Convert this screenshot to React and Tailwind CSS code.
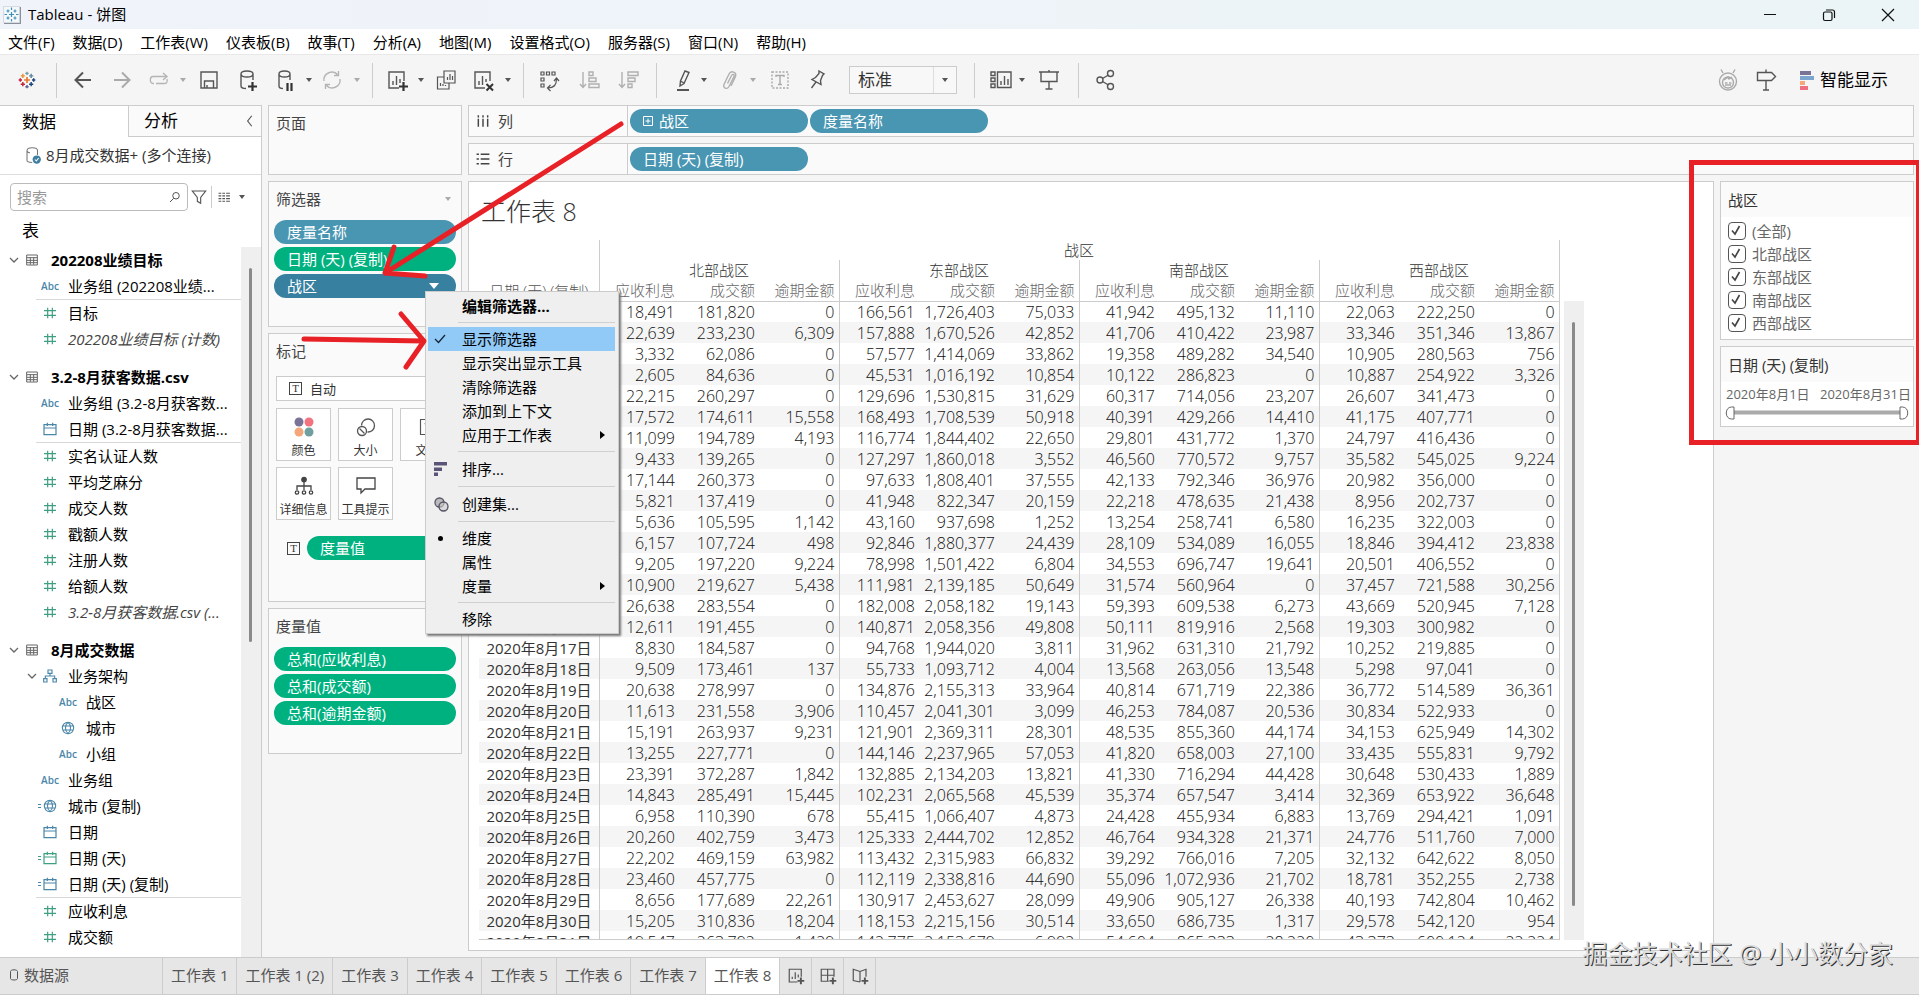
import React from "react";

const REGIONS = ["北部战区", "东部战区", "南部战区", "西部战区"];
const MEASURES = ["应收利息", "成交额", "逾期金额"];

// one line per day of August 2020, three measures for each region
const ROWS = `18,491 181,820 0 166,561 1,726,403 75,033 41,942 495,132 11,110 22,063 222,250 0
22,639 233,230 6,309 157,888 1,670,526 42,852 41,706 410,422 23,987 33,346 351,346 13,867
3,332 62,086 0 57,577 1,414,069 33,862 19,358 489,282 34,540 10,905 280,563 756
2,605 84,636 0 45,531 1,016,192 10,854 10,122 286,823 0 10,887 254,922 3,326
22,215 260,297 0 129,696 1,530,815 31,629 60,317 714,056 23,207 26,607 341,473 0
17,572 174,611 15,558 168,493 1,708,539 50,918 40,391 429,266 14,410 41,175 407,771 0
11,099 194,789 4,193 116,774 1,844,402 22,650 29,801 431,772 1,370 24,797 416,436 0
9,433 139,265 0 127,297 1,860,018 3,552 46,560 770,572 9,757 35,582 545,025 9,224
17,144 260,373 0 97,633 1,808,401 37,555 42,133 792,346 36,976 20,982 356,000 0
5,821 137,419 0 41,948 822,347 20,159 22,218 478,635 21,438 8,956 202,737 0
5,636 105,595 1,142 43,160 937,698 1,252 13,254 258,741 6,580 16,235 322,003 0
6,157 107,724 498 92,846 1,880,377 24,439 28,109 534,089 16,055 18,846 394,412 23,838
9,205 197,220 9,224 78,998 1,501,422 6,804 34,553 696,747 19,641 20,501 406,552 0
10,900 219,627 5,438 111,981 2,139,185 50,649 31,574 560,964 0 37,457 721,588 30,256
26,638 283,554 0 182,008 2,058,182 19,143 59,393 609,538 6,273 43,669 520,945 7,128
12,611 191,455 0 140,871 2,058,356 49,808 50,111 819,916 2,568 19,303 300,982 0
8,830 184,587 0 94,768 1,944,020 3,811 31,962 631,310 21,792 10,252 219,885 0
9,509 173,461 137 55,733 1,093,712 4,004 13,568 263,056 13,548 5,298 97,041 0
20,638 278,997 0 134,876 2,155,313 33,964 40,814 671,719 22,386 36,772 514,589 36,361
11,613 231,558 3,906 110,457 2,041,301 3,099 46,253 784,087 20,536 30,834 522,933 0
15,191 263,937 9,231 121,901 2,369,311 28,301 48,535 855,360 44,174 34,153 625,949 14,302
13,255 227,771 0 144,146 2,237,965 57,053 41,820 658,003 27,100 33,435 555,831 9,792
23,391 372,287 1,842 132,885 2,134,203 13,821 41,330 716,294 44,428 30,648 530,433 1,889
14,843 285,491 15,445 102,231 2,065,568 45,539 35,374 657,547 3,414 32,369 653,922 36,648
6,958 110,390 678 55,415 1,066,407 4,873 24,428 455,934 6,883 13,769 294,421 1,091
20,260 402,759 3,473 125,333 2,444,702 12,852 46,764 934,328 21,371 24,776 511,760 7,000
22,202 469,159 63,982 113,432 2,315,983 66,832 39,292 766,016 7,205 32,132 642,622 8,050
23,460 457,775 0 112,119 2,338,816 44,690 55,096 1,072,936 21,702 18,781 352,255 2,738
8,656 177,689 22,261 130,917 2,453,627 28,099 49,906 905,127 26,338 40,193 742,804 10,462
15,205 310,836 18,204 118,153 2,215,156 30,514 33,650 686,735 1,317 29,578 542,120 954
19,547 263,792 1,429 142,775 2,153,679 6,992 54,604 865,333 28,220 43,373 600,124 22,224`
  .split("\n")
  .map((line) => line.split(" "));

const BLUE = "#4a86a8";
const GREEN = "#3f9f83";

const Icon = ({ size = 24, color = "#555", children, className = "" }) => (
  <svg
    width={size}
    height={size}
    viewBox="0 0 24 24"
    fill="none"
    stroke={color}
    strokeWidth="1.4"
    className={"shrink-0 " + className}
  >
    {children}
  </svg>
);

const Caret = ({ color = "#555", className = "" }) => (
  <svg width="8" height="8" viewBox="0 0 8 8" className={"shrink-0 " + className}>
    <path d="M1 2h6L4 6z" fill={color} />
  </svg>
);

const TableauLogo = () => (
  <svg width="20" height="20" viewBox="0 0 24 24" fill="none" strokeWidth="1.7" className="shrink-0">
    <path d="M12 8.500v7M8.500 12h7" stroke="#e8762c" strokeWidth="2" />
    <path d="M7 4.500v5M4.500 7h5" stroke="#e8912d" />
    <path d="M17 4.500v5M14.500 7h5" stroke="#5b879b" />
    <path d="M7 14.500v5M4.500 17h5" stroke="#c72037" />
    <path d="M17 14.500v5M14.500 17h5" stroke="#1f457e" />
    <path d="M12 2v4M10 4h4" stroke="#7199a6" />
    <path d="M12 18v4M10 20h4" stroke="#5c6692" />
    <path d="M4 10v4M2 12h4" stroke="#c72037" />
    <path d="M20 10v4M18 12h4" stroke="#1f457e" />
  </svg>
);

const AppIcon = () => (
  <svg width="18" height="18" viewBox="0 0 18 18" fill="none" stroke="#3f8fb5" strokeWidth="1.200">
    <path d="M.500 .500h16v16h-16z" fill="#f4f8fb" stroke="#d5dbe2" />
    <path d="M17.500 1v16.500H1" stroke="#8b9199" />
    <path d="M8.500 6v5M6 8.500h5M5 3.500v3M3.500 5h3M12 3.500v3M10.500 5h3M5 10.500v3M3.500 12h3M12 10.500v3M10.500 12h3M8.500 1.500v2.500M8.500 13v2.500M1.500 8.500H4M13 8.500h2.500" />
  </svg>
);

const Abc = () => (
  <span className="flex w-4 justify-center text-[10px] font-semibold text-[#4a86a8]">Abc</span>
);

const Hash = () => (
  <Icon size={16} color={GREEN}>
    <path d="M8.500 4v16M15.500 4v16M3 8.500h18M3 15.500h18" strokeWidth="1.8" />
  </Icon>
);

const Equals = ({ color }) => (
  <svg width="4" height="6" viewBox="0 0 4 6" className="absolute top-[5px] -left-1">
    <path d="M0 1.500h3M0 4.500h3" stroke={color} />
  </svg>
);

const CalendarIcon = ({ color = BLUE, calc }) => (
  <span className="relative flex">
    <Icon size={16} color={color}>
      <path d="M3 5.500h18v15H3zM3 10.500h18M8 2.500v5M16 2.500v5" strokeWidth="1.8" />
    </Icon>
    {calc && <Equals color={color} />}
  </span>
);

const Globe = ({ calc }) => (
  <span className="relative flex">
    <Icon size={16} color={BLUE}>
      <path
        d="M12 3.500a8.500 8.500 0 1 0 0 17a8.500 8.500 0 1 0 0-17M12 3.500c-5 4-5 13 0 17M12 3.500c5 4 5 13 0 17M4 9h16M4 15h16"
        strokeWidth="1.6"
      />
    </Icon>
    {calc && <Equals color={BLUE} />}
  </span>
);

const Hierarchy = () => (
  <Icon size={16} color={BLUE}>
    <path d="M9 3h6v5H9zM2.500 16h5v5h-5zM16.500 16h5v5h-5zM12 8v4M5 16v-4h14v4" strokeWidth="1.7" />
  </Icon>
);

const SheetIcon = () => (
  <Icon size={16} color="#666">
    <path d="M4 4.500h16v15H4zM4 8.500h16M4 12.500h16M4 16h16M9.500 8v11M14.500 8v11" strokeWidth="1.5" />
  </Icon>
);

const TextMark = () => (
  <span className="flex size-[13px] shrink-0 items-center justify-center border border-[#444] font-['Liberation_Serif',serif] text-[11px] leading-none text-[#333]">
    T
  </span>
);

const Chevron = () => (
  <Icon size={12} color="#666">
    <path d="M4 8l8 8l8-8" strokeWidth="2.5" />
  </Icon>
);

const Group = ({ name, children }) => (
  <section className="pb-3">
    <h3 className="flex h-[26px] items-center pl-2 font-bold text-black">
      <Chevron />
      <span className="mr-[11px] ml-1 flex">
        <SheetIcon />
      </span>
      {name}
    </h3>
    <ul>{children}</ul>
  </section>
);

const Field = ({ icon, name, italic, nested }) => (
  <li className={"flex h-[26px] items-center gap-2.5 " + (nested ? "pl-[60px]" : "pl-[42px]")}>
    {icon}
    <span className={"whitespace-nowrap " + (italic ? "text-[#444] italic" : "text-black")}>{name}</span>
  </li>
);

const FieldLine = () => <li className="ml-9 h-px bg-[#d9d9d9]" />;

const DataPane = () => (
  <aside className="flex w-[262px] shrink-0 flex-col border-r border-[#ccc] bg-white">
    <div className="flex h-8 border-t border-[#ccc]">
      <button className="w-32 pl-[22px] text-left text-[17px] text-black">数据</button>
      <button className="flex flex-1 items-center justify-between border-b border-l border-[#ccc] bg-[#fafafa] pr-1 pl-[15px] text-[17px] text-black">
        分析
        <Icon size={14} color="#555">
          <path d="M15 3l-7 9l7 9" strokeWidth="2" />
        </Icon>
      </button>
    </div>
    <div className="flex h-[38px] items-center gap-1 border-b border-[#ddd] pb-0.5 pl-6 text-[#333]">
      <Icon size={18} color="#777">
        <path d="M4 6v13c0 2 3 3 7 3M4 6c0-5 14-5 14 0M4 6c0 2.500 2 3 4 3M18 6v6" />
        <circle cx="17" cy="18" r="5.500" fill="#3f7fa3" stroke="none" />
        <path d="M14.500 18l2 2l3-4" stroke="#fff" />
      </Icon>
      8月成交数据+ (多个连接)
    </div>
    <div className="mt-2 flex h-[28px] items-center pl-2.5">
      <div className="flex h-[28px] w-[178px] items-center rounded-sm border border-[#bbb] pr-1.5 pl-1.5">
        <input aria-label="搜索" placeholder="搜索" className="w-full min-w-0 outline-none placeholder:text-[#999]" />
        <Icon size={12} color="#555">
          <path d="M14 3a6.500 6.500 0 1 0 0 13a6.500 6.500 0 1 0 0-13M9.500 14.500L2 22" strokeWidth="2" />
        </Icon>
      </div>
      <button aria-label="筛选" className="ml-[3px]">
        <Icon size={16}>
          <path d="M2 3h20l-7.500 9.500v9l-5-3v-6z" strokeWidth="1.7" />
        </Icon>
      </button>
      <span className="ml-1 h-[22px] w-px bg-[#ccc]" />
      <button aria-label="视图" className="ml-1.5 flex items-center gap-[7px]">
        <Icon size={13}>
          <path d="M1 4h5M8 4h5M15 4h7M1 9h5M8 9h5M15 9h7M1 14h5M8 14h5M15 14h7M1 19h5M8 19h5M15 19h7" strokeWidth="2" />
        </Icon>
        <Caret />
      </button>
    </div>
    <h2 className="mt-2 flex h-6 items-center pl-[22px] text-[17px] text-black">表</h2>

    <div className="mt-1 flex min-h-0 flex-1">
      <div className="min-w-0 flex-1 overflow-hidden">
        <Group name="202208业绩目标">
          <Field icon={<Abc />} name="业务组 (202208业绩..." />
          <FieldLine />
          <Field icon={<Hash />} name="目标" />
          <Field icon={<Hash />} name="202208业绩目标 (计数)" italic />
        </Group>
        <Group name="3.2-8月获客数据.csv">
          <Field icon={<Abc />} name="业务组 (3.2-8月获客数..." />
          <Field icon={<CalendarIcon />} name="日期 (3.2-8月获客数据..." />
          <FieldLine />
          {["实名认证人数", "平均芝麻分", "成交人数", "戳额人数", "注册人数", "给额人数"].map((n) => (
            <Field key={n} icon={<Hash />} name={n} />
          ))}
          <Field icon={<Hash />} name="3.2-8月获客数据.csv (..." italic />
        </Group>
        <Group name="8月成交数据">
          <li className="flex h-[26px] items-center pl-[26px]">
            <Chevron />
            <span className="mr-2.5 ml-1 flex">
              <Hierarchy />
            </span>
            <span className="text-black">业务架构</span>
          </li>
          <Field nested icon={<Abc />} name="战区" />
          <Field nested icon={<Globe />} name="城市" />
          <Field nested icon={<Abc />} name="小组" />
          <Field icon={<Abc />} name="业务组" />
          <Field icon={<Globe calc />} name="城市 (复制)" />
          <Field icon={<CalendarIcon />} name="日期" />
          <Field icon={<CalendarIcon color={GREEN} calc />} name="日期 (天)" />
          <Field icon={<CalendarIcon calc />} name="日期 (天) (复制)" />
          <FieldLine />
          <Field icon={<Hash />} name="应收利息" />
          <Field icon={<Hash />} name="成交额" />
        </Group>
      </div>
      <div className="w-5 shrink-0 bg-[#efefef] pt-[21px] pl-2">
        <div className="h-[374px] w-[3px] rounded-full bg-[#8a8a8a]" />
      </div>
    </div>
  </aside>
);

const Pill = ({ tone = "blue", className = "w-full", children }) => {
  const tones = {
    blue: "bg-[#4996b2]",
    dark: "bg-[#37809f]",
    green: "bg-[#00b180]",
  };
  return (
    <button className={`flex h-6 items-center rounded-full px-[13px] text-white ${tones[tone]} ${className}`}>
      {children}
    </button>
  );
};

const Card = ({ title, className = "", children }) => (
  <section className={"border border-[#ccc] bg-[#fafafa] px-[5px] " + className}>
    <h2 className="flex h-[34px] items-center pl-0.5 text-[#444]">{title}</h2>
    {children}
  </section>
);

const MarkButton = ({ name, children, className = "w-[55px]" }) => (
  <button
    className={
      "flex h-[53px] shrink-0 flex-col items-center justify-between border border-[#ccc] bg-white pt-2 text-[12px] leading-[18px] text-[#333] " +
      className
    }
  >
    {children}
    <span className="whitespace-nowrap">{name}</span>
  </button>
);

const Shelves = () => (
  <div className="flex w-[194px] shrink-0 flex-col gap-1.5">
    <Card title="页面" className="h-[70px]" />
    <Card
      title={
        <span className="flex w-full items-center justify-between pr-1">
          筛选器
          <Caret color="#aaa" />
        </span>
      }
      className="h-[146px] border-[#b0b0b0]"
    >
      <div className="mt-1 flex flex-col gap-[3px]">
        <Pill>度量名称</Pill>
        <Pill tone="green">日期 (天) (复制)</Pill>
        <Pill tone="dark">
          战区
          <svg width="10" height="6" viewBox="0 0 10 6" className="mr-1 ml-auto">
            <path d="M0 0h10L5 6z" fill="#fff" />
          </svg>
        </Pill>
      </div>
    </Card>
    <Card title="标记" className="h-[269px] overflow-hidden">
      <button className="mt-2 ml-0.5 flex h-[25px] w-[174px] items-center gap-2 border border-[#ccc] bg-white pl-3 text-[13px] text-[#333]">
        <TextMark />
        自动
      </button>
      <div className="mt-[7px] ml-0.5 flex gap-[7px]">
        <MarkButton name="颜色">
          <svg width="20" height="20" viewBox="0 0 20 20">
            <circle cx="5" cy="5" r="4.500" fill="#7b7298" />
            <circle cx="15" cy="5" r="4.500" fill="#f2727f" />
            <circle cx="5" cy="15" r="4.500" fill="#f3a77a" />
            <circle cx="15" cy="15" r="4.500" fill="#6f9f9f" />
          </svg>
        </MarkButton>
        <MarkButton name="大小">
          <svg width="20" height="20" viewBox="0 0 20 20" fill="none" stroke="#555" strokeWidth="1.300">
            <path d="M5.500 8.500a6.500 6.500 0 1 1 6 6.500" />
            <circle cx="6" cy="14" r="4.500" />
            <path d="M3.500 11.500l5 5" />
          </svg>
        </MarkButton>
        <MarkButton name="文本">
          <Icon size={20}>
            <path d="M3 3h18v18H3zM8 8h8M12 8v9" />
          </Icon>
        </MarkButton>
      </div>
      <div className="mt-1.5 ml-0.5 flex gap-[7px]">
        <MarkButton name="详细信息">
          <svg width="20" height="20" viewBox="0 0 20 20" fill="none" stroke="#444" strokeWidth="1.300">
            <circle cx="10" cy="3.500" r="2.200" fill="#444" />
            <path d="M10 5v9M3 14v-4h14v4" />
            <circle cx="3" cy="16.500" r="1.700" />
            <circle cx="10" cy="16.500" r="1.700" />
            <circle cx="17" cy="16.500" r="1.700" />
          </svg>
        </MarkButton>
        <MarkButton name="工具提示">
          <svg width="20" height="20" viewBox="0 0 20 20" fill="none" stroke="#444" strokeWidth="1.300">
            <path d="M1 2h18v11H9l-4 4v-4H1z" />
          </svg>
        </MarkButton>
      </div>
      <div className="mt-4 ml-[13px] flex items-center gap-[7px]">
        <TextMark />
        <Pill tone="green" className="w-[149px]">
          度量值
        </Pill>
      </div>
    </Card>
    <Card title="度量值" className="h-[146px]">
      <div className="mt-1 flex flex-col gap-[3px]">
        <Pill tone="green">总和(应收利息)</Pill>
        <Pill tone="green">总和(成交额)</Pill>
        <Pill tone="green">总和(逾期金额)</Pill>
      </div>
    </Card>
  </div>
);

const ShelfRow = ({ label, icon, children }) => (
  <div className="flex h-8 shrink-0 border border-[#ccc] bg-[#fafafa]">
    <div className="flex w-[159px] items-center gap-2 border-r border-[#ccc] pl-[7px] text-[#444]">
      {icon}
      {label}
    </div>
    <div className="flex items-center gap-0.5 pl-0.5">{children}</div>
  </div>
);

const Crosstab = () => (
  <table className="w-[1080px] table-fixed border-collapse text-[15px] leading-5 text-[#333]">
    <colgroup>
      <col className="w-[120px]" />
      {REGIONS.flatMap((r) => MEASURES.map((m) => <col key={r + m} className="w-20" />))}
    </colgroup>
    <thead>
      <tr className="h-5">
        <th rowSpan={3} className="border-r border-b border-[#ccc] p-0 align-bottom font-light text-[#555]">
          日期 (天) (复制)
        </th>
        <th colSpan={12} className="border-r border-[#ccc] p-0 font-light">
          战区
        </th>
      </tr>
      <tr className="h-5">
        {REGIONS.map((r) => (
          <th key={r} colSpan={3} className="border-r border-[#ccc] p-0 font-light">
            {r}
          </th>
        ))}
      </tr>
      <tr className="h-[21px]">
        {REGIONS.map((r) =>
          MEASURES.map((m, i) => (
            <th
              key={r + m}
              className={
                "border-b border-[#ccc] p-0 pr-1 text-right font-light text-[#666] " + (i === 2 ? "border-r" : "")
              }
            >
              {m}
            </th>
          ))
        )}
      </tr>
    </thead>
    <tbody>
      {ROWS.map((row, day) => (
        <tr key={day} className="h-[21px] odd:bg-white even:bg-[#f5f5f5]">
          <th className="border-r border-[#ccc] p-0 pr-[7px] text-right font-normal whitespace-nowrap text-[#333]">
            2020年8月{day + 1}日
          </th>
          {row.map((value, i) => (
            <td
              key={i}
              className={
                "border-[#ccc] p-0 pr-1 text-right text-[16px] font-light text-[#111] " +
                (i % 3 === 2 ? "border-r" : "")
              }
            >
              {value}
            </td>
          ))}
        </tr>
      ))}
    </tbody>
  </table>
);

const Check = ({ label }) => (
  <label className="flex h-[23px] items-center gap-1.5 text-[#666]">
    <span className="grid">
      <input
        type="checkbox"
        defaultChecked
        className="col-start-1 row-start-1 size-[18px] appearance-none rounded-sm border border-[#555] bg-white"
      />
      <svg viewBox="0 0 18 18" className="pointer-events-none col-start-1 row-start-1 size-[18px]">
        <path d="M4 8.500l3 3.500l4.500-8" fill="none" stroke="#444" strokeWidth="1.600" />
      </svg>
    </span>
    {label}
  </label>
);

const QuickFilters = () => (
  <div className="flex w-[200px] shrink-0 flex-col gap-1.5 pl-1.5">
    <section className="h-[159px] border border-[#ccc] bg-white">
      <h2 className="flex h-[35px] items-center bg-[#fafafa] pl-[7px] text-[#333]">战区</h2>
      <div className="mt-0.5 pl-[7px]">
        {["(全部)", ...REGIONS].map((r) => (
          <Check key={r} label={r} />
        ))}
      </div>
    </section>
    <section className="h-[81px] border border-[#ccc] bg-white">
      <h2 className="flex h-[35px] items-center bg-[#fafafa] pl-[7px] text-[#333]">日期 (天) (复制)</h2>
      <div className="flex h-6 items-center justify-between pr-0.5 pl-[5px] text-[13px] whitespace-nowrap text-[#666]">
        <span>2020年8月1日</span>
        <span>2020年8月31日</span>
      </div>
      <div className="relative mx-1">
        <svg width="184" height="14" viewBox="0 0 184 14" fill="none" className="w-full">
          <path d="M8 6.500h168" stroke="#aaa" strokeWidth="4" />
          <path d="M9 1v12H6.500c-7 0-7-12 0-12z" fill="#fff" stroke="#666" />
          <path d="M175 1v12h2.500c7 0 7-12 0-12z" fill="#fff" stroke="#666" />
        </svg>
        <input
          type="range"
          aria-label="开始日期"
          min="1"
          max="31"
          defaultValue="1"
          className="absolute inset-y-0 left-0 w-1/2 opacity-0"
        />
        <input
          type="range"
          aria-label="结束日期"
          min="1"
          max="31"
          defaultValue="31"
          className="absolute inset-y-0 right-0 w-1/2 opacity-0"
        />
      </div>
    </section>
  </div>
);

const Worksheet = () => (
  <main className="flex min-w-0 flex-1 flex-col gap-1.5 pr-[5px]">
    <ShelfRow
      label="列"
      icon={
        <Icon size={14} color="#444">
          <path d="M4 2v4M4 8v14M12 2v4M12 8v14M20 2v4M20 8v14" strokeWidth="2.500" />
        </Icon>
      }
    >
      <Pill className="w-[178px]">
        <svg width="10" height="10" viewBox="0 0 10 10" fill="none" stroke="#fff" className="mr-1.5">
          <path d="M.5 .5h9v9h-9zM5 2.500v5M2.500 5h5" />
        </svg>
        战区
      </Pill>
      <Pill className="w-[178px]">度量名称</Pill>
    </ShelfRow>
    <ShelfRow
      label="行"
      icon={
        <Icon size={14} color="#444">
          <path d="M1 4h4M8 4h15M1 12h4M8 12h15M1 20h4M8 20h15" strokeWidth="2.500" />
        </Icon>
      }
    >
      <Pill className="w-[178px]">日期 (天) (复制)</Pill>
    </ShelfRow>

    <div className="flex min-h-0 flex-1">
      <div className="flex min-w-0 flex-1 flex-col border border-[#ccc] bg-white pb-2.5 pl-2.5">
        <h1 className="flex h-[58px] shrink-0 items-center pl-0.5 text-[25px] font-light text-[#333]">工作表 8</h1>
        <div className="flex min-h-0 flex-1">
          <div className="min-h-0 overflow-hidden border-b border-[#ccc]">
            <Crosstab />
          </div>
          <div className="mt-[61px] ml-1 w-5 bg-[#efefef] pt-[21px] pl-2">
            <div className="h-[584px] w-[3px] rounded-full bg-[#8a8a8a]" />
          </div>
        </div>
      </div>
      <QuickFilters />
    </div>
  </main>
);

const Tool = ({ name, className, color, children }) => (
  <button aria-label={name} className={"flex " + className}>
    <Icon color={color}>{children}</Icon>
  </button>
);

const ToolLine = ({ className }) => <span className={"h-[35px] w-px bg-[#ccc] " + className} />;

const Toolbar = () => (
  <div className="flex h-[51px] shrink-0 items-center border-t border-[#e8e8e8] bg-[#f5f5f5]">
    <button aria-label="开始" className="ml-[17px]">
      <TableauLogo />
    </button>
    <ToolLine className="ml-[19px]" />
    <Tool name="后退" className="ml-3.5">
      <path d="M20 12H5M12 4.500L4.500 12l7.500 7.500" strokeWidth="2" />
    </Tool>
    <Tool name="前进" className="ml-[15px]" color="#aaa">
      <path d="M4 12h15M12 4.500l7.500 7.500l-7.500 7.500" strokeWidth="2" />
    </Tool>
    <Tool name="重做" className="ml-[13px]" color="#b5b5b5">
      <path d="M7 15.500H6c-3.500 0-3.500-7 0-7h13M16 5l4 3.500l-4 3.500M20 11c1 4-1 4.500-3 4.500h-8" />
    </Tool>
    <Caret color="#aaa" className="ml-2" />
    <Tool name="保存" className="ml-2.5">
      <path d="M4 4h16v16H4zM7.500 20v-7h9v7M10 20v-3" />
    </Tool>
    <Tool name="新建数据源" className="ml-[15px]">
      <path d="M5 6v12c0 1.500 2 2.500 5 2.500M5 6c0-4 12-4 12 0s-12 4-12 0M17 6v6" />
      <path d="M16.500 14v9M12 18.500h9" stroke="#333" strokeWidth="2.200" />
    </Tool>
    <Tool name="暂停自动更新" className="ml-3.5">
      <path d="M5 6v12c0 1.500 2 2.500 4 2.500M5 6c0-4 11-4 11 0s-11 4-11 0M16 6v6" />
      <path d="M13.500 15v8M17.500 15v8" stroke="#333" strokeWidth="2.200" />
    </Tool>
    <Caret className="ml-[7px]" />
    <Tool name="运行更新" className="ml-[7px]" color="#b5b5b5">
      <path d="M4 13c-1-8 9-12 14-6M20 11c1 8-9 12-14 6M18.500 3v4.500h-4.500M5.500 21v-4.500H10" />
    </Tool>
    <Caret color="#aaa" className="ml-[9px]" />
    <ToolLine className="ml-[11px]" />
    <Tool name="新建工作表" className="ml-3">
      <path d="M14 20H4V4h15v9M8 17v-4M11.500 17V8M15 15v-4" />
      <path d="M18.500 14v9M14 18.500h9" stroke="#333" strokeWidth="2.200" />
    </Tool>
    <Caret className="ml-2" />
    <Tool name="复制" className="ml-[9px]">
      <path d="M10 3h11v12H10zM10 9H3.500v12H15v-6M13.500 12V9M16 12V6M18.500 12V8M6.500 18v-3M9 18v-2M11.500 18v-1" strokeWidth="1.2" />
    </Tool>
    <Tool name="清除工作表" className="ml-3.5">
      <path d="M13 20H3V4h15v9M7 17v-4M10.500 17V8M14 14v-3" />
      <path d="M14.500 16l6.500 6.500M21 16l-6.500 6.500" stroke="#333" strokeWidth="2" />
    </Tool>
    <Caret className="ml-2" />
    <ToolLine className="ml-[11px]" />
    <Tool name="交换行和列" className="ml-[13px]">
      <path d="M4 4h3v3H4zM9.500 4h3v3h-3zM15 4h3v3h-3zM4 10h3v3H4zM4 16h3v3H4zM11 20c6 0 8.500-3 8.500-9M17 13l2.500-3l2.500 3M13.500 17l-3 3l3 3" strokeWidth="1.2" />
    </Tool>
    <Tool name="升序排序" className="ml-4" color="#b0b0b0">
      <path d="M6 4v15M3 16l3 3.500l3-3.500M12 4h4v3.500h-4zM12 10h7v3.500h-7zM12 16h10v3.500H12z" />
    </Tool>
    <Tool name="降序排序" className="ml-[15px]" color="#b0b0b0">
      <path d="M6 4v15M3 16l3 3.500l3-3.500M12 4h10v3.500H12zM12 10h7v3.500h-7zM12 16h4v3.500h-4z" />
    </Tool>
    <ToolLine className="ml-4" />
    <Tool name="突出显示" className="ml-3.5">
      <path d="M14 3l4 1.500l-5 11l-4 2.500l.5-5zM9.500 13l3.500 2" />
      <path d="M6 22h12" strokeWidth="2" />
    </Tool>
    <Caret className="ml-[5px]" />
    <Tool name="组成员" className="ml-[9px]" color="#b0b0b0">
      <path d="M10.500 15.500l4-8c1-2 3.500-1 2.500 1l-5 10c-2 3.500-6.500 1.500-5-2l5-10.500c2-4 8-2 6.500 2.500l-4.500 9.500" />
    </Tool>
    <Caret color="#aaa" className="ml-2" />
    <Tool name="显示标记标签" className="ml-[11px]" color="#aaa">
      <path d="M4 4h16v16H4z" strokeDasharray="2 1.500" />
      <path d="M8 9V7.500h8V9M12 7.500v9M10 16.500h4" />
    </Tool>
    <Tool name="固定轴" className="ml-[13px]">
      <path d="M14 3l5 3l-1.500 1.500l-2 5l.5 4l-9-5l3.500-2l3.500-4zM11 14l-4.500 6" />
    </Tool>
    <label className="relative ml-5 flex h-7 w-[108px] items-center border border-[#ccc] bg-white">
      <select aria-label="适合" className="h-full w-full appearance-none bg-[#f8f8f8] pl-2 text-[17px] text-[#333]">
        <option>标准</option>
      </select>
      <span className="pointer-events-none absolute inset-y-0 right-0 flex w-[23px] items-center justify-center border-l border-[#ddd]">
        <Caret />
      </span>
    </label>
    <ToolLine className="ml-[17px]" />
    <Tool name="显示/隐藏卡" className="ml-3.5">
      <path d="M2 4h4v3.500H2zM2 10h4v3.500H2zM2 16h4v3.500H2zM8.500 4H22v15.500H8.500zM12 17v-4M15.500 17V8M19 17v-6" />
    </Tool>
    <Caret className="ml-[5px]" />
    <Tool name="演示模式" className="ml-[11px]">
      <path d="M2 4h20M4 4v9.500h16V4M12 2v2M12 13.500V21M8.500 21h7" />
    </Tool>
    <ToolLine className="ml-[17px]" />
    <Tool name="共享" className="ml-3.5">
      <path d="M9.500 10.500l6-3.500M9.500 13.500l6 3.500" />
      <circle cx="7" cy="12" r="3" />
      <circle cx="17.500" cy="5.500" r="3" />
      <circle cx="17.500" cy="18.500" r="3" />
    </Tool>

    <div className="ml-auto flex items-center pr-[31px]">
      <Tool name="助手" color="#aaa">
        <circle cx="12" cy="13.500" r="8.500" />
        <circle cx="12" cy="14.500" r="5.500" />
        <path d="M7 5L5 1.500M17 5l2-3.500M8 12l4-3l1 2l3-2M9 15h2.500M13 15h2.500M9 17h6" />
      </Tool>
      <Tool name="指南" className="ml-3.5">
        <path d="M3.500 4.500h14l4 4l-4 4h-14zM12 1.500v3M12 12.500V22M9 22h6" />
      </Tool>
      <button className="ml-[22px] flex items-center gap-1.5 text-[17px] text-black">
        <svg width="14" height="20" viewBox="0 0 14 20">
          <path d="M0 1h11v4H0z" fill="#7b7298" />
          <path d="M0 6h14v4H0z" fill="#7ba5cf" />
          <path d="M0 11h5v4H0z" fill="#f3a77a" />
          <path d="M0 16h8v4H0z" fill="#ee7080" />
        </svg>
        智能显示
      </button>
    </div>
  </div>
);

const TitleBar = () => (
  <header className="flex h-[29px] shrink-0 items-center bg-linear-to-r from-[#f0f3fa] to-[#ebf4f6] pl-[3px] text-black">
    <AppIcon />
    <span className="ml-[7px] pb-0.5 text-[15px]">Tableau - 饼图</span>
    <div className="ml-auto flex items-center gap-[45px] pr-6">
      <button aria-label="最小化">
        <svg width="14" height="14" viewBox="0 0 14 14" stroke="#111">
          <path d="M1 6.500h12" />
        </svg>
      </button>
      <button aria-label="还原">
        <svg width="14" height="14" viewBox="0 0 14 14" fill="none" stroke="#111" strokeWidth="1.200">
          <rect x="1.500" y="4" width="8.500" height="8.500" rx="1.500" />
          <path d="M4 2h6.500c1.500 0 2 .5 2 2v6" />
        </svg>
      </button>
      <button aria-label="关闭">
        <svg width="14" height="14" viewBox="0 0 14 14" stroke="#111" strokeWidth="1.200">
          <path d="M1 1l12 12M13 1L1 13" />
        </svg>
      </button>
    </div>
  </header>
);

const MENUS = [
  "文件(F)",
  "数据(D)",
  "工作表(W)",
  "仪表板(B)",
  "故事(T)",
  "分析(A)",
  "地图(M)",
  "设置格式(O)",
  "服务器(S)",
  "窗口(N)",
  "帮助(H)",
];

const SheetTabs = () => (
  <footer className="flex h-[38px] shrink-0 border-y border-[#ccc] bg-[#e6e6e6] text-[#555]">
    <button className="flex w-[163px] items-center gap-1 border-r border-[#ccc] pb-0.5 pl-2">
      <Icon size={12}>
        <path d="M5 5v14c0 4 14 4 14 0V5c0-4.500-14-4.500-14 0" strokeWidth="2" />
      </Icon>
      数据源
    </button>
    {["1", "1 (2)", "3", "4", "5", "6", "7", "8"].map((n) => (
      <button key={n} className={"min-w-[74px] border-r border-[#ccc] px-2 pb-0.5 " + (n === "8" ? "bg-white" : "")}>
        工作表 {n}
      </button>
    ))}
    <button aria-label="新建工作表" className="flex w-8 items-center justify-center border-r border-[#ccc]">
      <Icon size={18}>
        <path d="M14 20H3V3h16v10M7 16v-3M11 16V7M15 14v-4" strokeWidth="1.600" />
        <path d="M18.500 14v9M14 18.500h9" strokeWidth="2.600" />
      </Icon>
    </button>
    <button aria-label="新建仪表板" className="flex w-8 items-center justify-center border-r border-[#ccc]">
      <Icon size={18}>
        <path d="M13 19H3V3h17v10M3 11h17M11.500 3v16" strokeWidth="1.600" />
        <path d="M18.500 14v9M14 18.500h9" strokeWidth="2.600" />
      </Icon>
    </button>
    <button aria-label="新建故事" className="flex w-8 items-center justify-center border-r border-[#ccc]">
      <Icon size={18}>
        <path d="M12 6L3 3v15l9 2M12 6l8-3v10M12 6v14" strokeWidth="1.600" />
        <path d="M18.500 14v9M14 18.500h9" strokeWidth="2.600" />
      </Icon>
    </button>
  </footer>
);

const MenuItem = ({ icon, active, bold, tall, more, children }) => (
  <button
    role="menuitem"
    className={
      "flex w-full items-center text-left text-black " +
      (tall ? "h-[26px] " : "h-6 ") +
      (active ? "bg-[#91c9f7] " : "") +
      (bold ? "font-bold" : "")
    }
  >
    <span className="flex w-[34px] items-center pl-1.5">{icon}</span>
    {children}
    {more && (
      <svg width="5" height="8" viewBox="0 0 5 8" className="mr-2.5 ml-auto">
        <path d="M0 0l5 4l-5 4z" />
      </svg>
    )}
  </button>
);

const MenuLine = () => (
  <div className="flex h-[9px] items-center pl-[30px]">
    <div className="h-px w-full bg-[#d0d0d0]" />
  </div>
);

const ContextMenu = () => (
  <div
    role="menu"
    className="absolute top-[291px] left-[425px] w-[194px] border border-[#ccc] bg-[#efefef] p-0.5 pr-[3px] shadow-[2px_2px_2px_#777]"
  >
    <MenuItem bold>编辑筛选器...</MenuItem>
    <MenuLine />
    <MenuItem
      active
      icon={
        <svg width="12" height="10" viewBox="0 0 12 10">
          <path d="M1 5l3.500 3.500L11 1" fill="none" stroke="#123" strokeWidth="1.200" />
        </svg>
      }
    >
      显示筛选器
    </MenuItem>
    <MenuItem>显示突出显示工具</MenuItem>
    <MenuItem>清除筛选器</MenuItem>
    <MenuItem>添加到上下文</MenuItem>
    <MenuItem more>应用于工作表</MenuItem>
    <MenuLine />
    <MenuItem
      tall
      icon={
        <svg width="14" height="14" viewBox="0 0 14 14" fill="#5a5478">
          <path d="M0 0h13v3.500H0zM0 5.500h8v3.500H0zM0 10.500h4v3.500H0z" />
        </svg>
      }
    >
      排序...
    </MenuItem>
    <MenuLine />
    <MenuItem
      tall
      icon={
        <svg width="15" height="15" viewBox="0 0 15 15" stroke="#556" strokeWidth="1.300">
          <circle cx="5.500" cy="5.500" r="4.500" fill="#bbb" />
          <circle cx="9.500" cy="9.500" r="4.500" fill="#ccc" fillOpacity=".6" />
        </svg>
      }
    >
      创建集...
    </MenuItem>
    <MenuLine />
    <MenuItem icon={<span className="ml-1 size-[5px] rounded-full bg-black" />}>维度</MenuItem>
    <MenuItem>属性</MenuItem>
    <MenuItem more>度量</MenuItem>
    <MenuLine />
    <MenuItem>移除</MenuItem>
  </div>
);

// hand-drawn arrows that point at the filter pill and at the menu entry
const Arrows = () => (
  <svg
    width="640"
    height="380"
    viewBox="0 0 640 380"
    className="pointer-events-none absolute top-0 left-0"
    fill="none"
    stroke="#e82127"
    strokeWidth="5"
    strokeLinecap="round"
    strokeLinejoin="round"
  >
    <path d="M621 124L385 273M394 247L385 273L425 276" />
    <path d="M304 339L424 341M401 314L424 341L406 367" />
  </svg>
);

const App = () => {
  return (
    <div className="relative flex h-screen flex-col overflow-hidden bg-[#f5f5f5] font-['Open_Sans','Noto_Sans_CJK_SC',sans-serif] text-[15px] leading-5">
      <TitleBar />
      <nav className="flex h-[25px] shrink-0 items-center gap-[18px] bg-white pl-2 text-black">
        {MENUS.map((m) => (
          <button key={m}>{m}</button>
        ))}
      </nav>
      <Toolbar />

      <div className="flex min-h-0 flex-1">
        <DataPane />
        <div className="flex min-w-0 flex-1 gap-1.5 pb-1.5 pl-1.5">
          <Shelves />
          <Worksheet />
        </div>
      </div>
      <SheetTabs />

      <ContextMenu />
      <Arrows />
      <div className="pointer-events-none absolute top-[160px] right-0 h-[285px] w-[230px] border-[5px] border-r-[3px] border-[#e82127]" />
      <p className="absolute right-[26px] bottom-[26px] text-[25px] leading-8 whitespace-nowrap text-[#ddd] [text-shadow:1px_1px_0_#333]">
        掘金技术社区 @ 小小数分家
      </p>
    </div>
  );
};

export default App;
